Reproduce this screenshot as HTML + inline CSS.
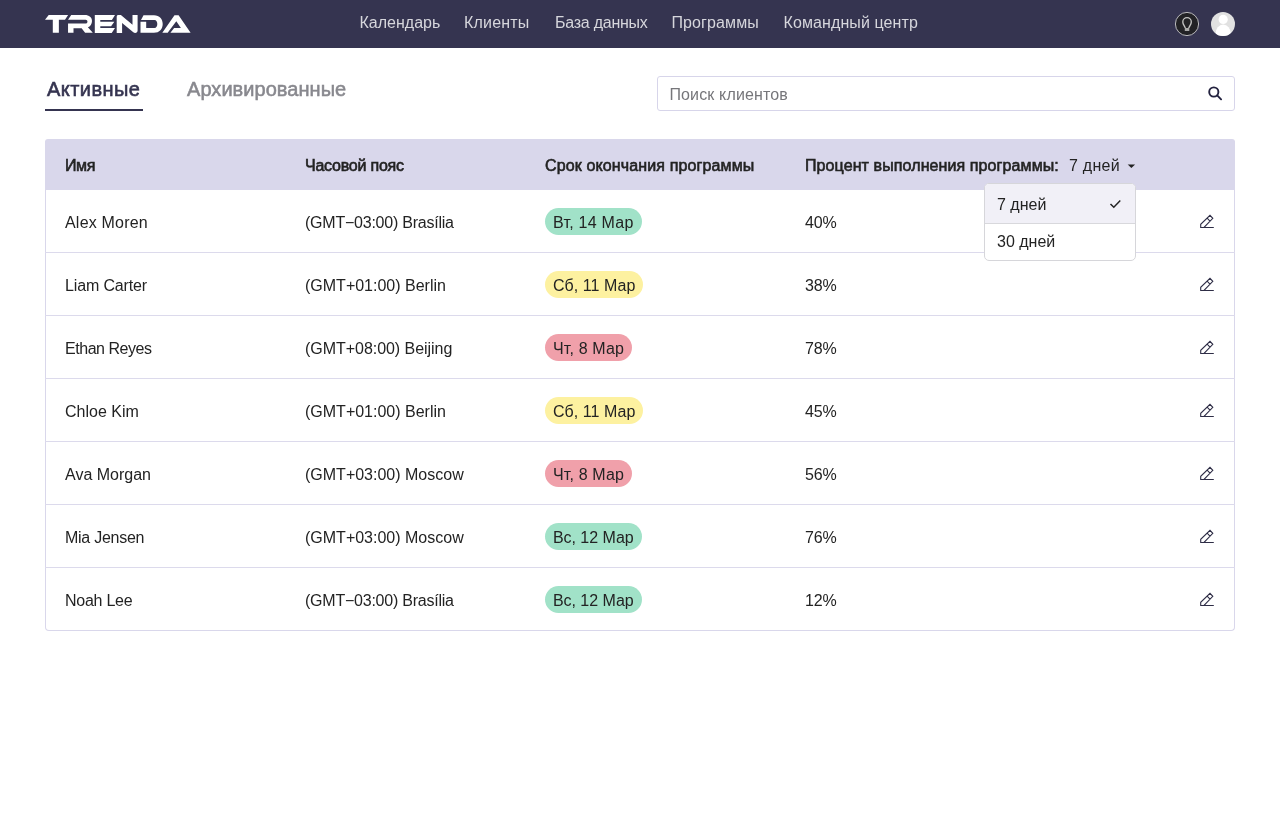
<!DOCTYPE html>
<html><head><meta charset="utf-8"><title>Trenda</title>
<style>
*{box-sizing:border-box}
html,body{margin:0;padding:0;background:#fff;width:1280px;height:832px;overflow:hidden;font-family:"Liberation Sans",sans-serif;color:#232323}
.nav{position:absolute;left:0;top:0;width:1280px;height:48px;background:#353450}
.logo{position:absolute;left:45px;top:15px}
.nl{position:absolute;top:14px;font-size:16px;line-height:18px;color:#d6d6dc;white-space:nowrap}
.tab{position:absolute;top:78px;font-size:20px;line-height:23px;font-weight:400;white-space:nowrap}
.ul{position:absolute;left:45px;top:109px;width:98px;height:2px;background:#353450}
.search{position:absolute;left:657px;top:76px;width:578px;height:35px;border:1px solid #d7d5ea;border-radius:3px;background:#fff}
.ph{position:absolute;left:11.4px;top:9px;letter-spacing:0.15px;font-size:16px;line-height:18px;color:#76767a;white-space:nowrap}
.table{position:absolute;left:45px;top:140px;width:1190px;height:491px;border:1px solid #d9d7eb;border-top:none;border-radius:4px;overflow:hidden}
.thead{position:absolute;left:0;top:139px;width:1190px;height:51px;background:#d9d7eb;border-radius:3px 3px 0 0}
.th{position:absolute;top:157px;font-size:16px;line-height:18px;font-weight:400;-webkit-text-stroke:0.6px #232323;white-space:nowrap;color:#232323}
.row{position:absolute;left:45px;width:1190px;height:63px;border-bottom:1px solid #dcdaec}
.cell{position:absolute;top:24px;font-size:16px;line-height:18px;white-space:nowrap}
.c1{left:20px} .c2{left:260px} .c4{left:760px}
.badge{position:absolute;left:500px;top:18px;height:27px;border-radius:14px;padding:0 8px;font-size:16px;line-height:29px;white-space:nowrap}
.g{background:#a1e2c8} .y{background:#fdf1a0} .r{background:#f0a0aa}
.pen{position:absolute;left:1154px;top:24px}
.dd{position:absolute;left:984px;top:183px;width:152px;height:78px;border:1px solid #d6d6da;border-radius:5px;background:#fff;overflow:hidden}
.dd1{position:absolute;left:0;top:0;width:150px;height:40px;background:#f1f0f7;border-bottom:1px solid #d8d8dc}
.ddt{position:absolute;left:12px;font-size:16px;line-height:18px;white-space:nowrap;color:#232323}
.wrap{position:absolute;left:0;top:0;width:1280px;height:832px;will-change:transform}
</style></head><body><div class="wrap">
<div class="nav">
  <svg class="logo" width="146" height="18" viewBox="0 0 146 18">
    <g fill="#ffffff" fill-rule="evenodd">
      <path d="M3.7 0 H23.1 L20 4.75 H13.86 V17.8 H7.8 V4.75 H0 Z"/>
      <path d="M26.2 0 H39.8 C44.2 0 47 2.6 47 5.9 C47 8.8 45.3 11.3 42.9 12.3 L47.8 17.8 H40.1 L36.6 13.15 H28.5 V17.8 H23.04 V8.5 H40.6 C41.6 8.5 42.45 7.7 42.45 6.65 C42.45 5.6 41.6 4.8 40.6 4.8 H23.04 Z"/>
      <path d="M49.8 0 H70 L66.9 5.05 H55.3 V6.85 H69.3 L66.1 11.25 H55.3 V13.05 H70 L66.7 18 H49.8 Z"/>
      <path d="M73.4 0 H75.9 L87.5 9.7 V0 H92.6 V15.6 C92.6 17 91.6 18 90.2 18 C89.5 18 88.9 17.8 88.3 17.3 L77.1 8 V18 H71.7 V1.7 C71.7 0.7 72.4 0 73.4 0 Z"/>
      <path d="M98.5 0.2 H109 C114.5 0.2 117.7 4 117.7 9 C117.7 14 114.5 17.8 109 17.8 H95.5 V6.7 H101.2 V12.9 H109.5 C111.3 12.9 112.3 11.2 112.3 8.9 C112.3 6.6 111.3 4.9 109.5 4.9 H96 Z"/>
      <path d="M117.3 17.8 L129.5 0.2 H133.6 L145.6 17.8 Z M131.3 6.3 L122.7 17.8 H125.4 L129.1 12.9 H135.9 Z"/>
    </g>
  </svg>
  <span class="nl" style="left:359.5px">Календарь</span>
  <span class="nl" style="left:464px;letter-spacing:0.2px">Клиенты</span>
  <span class="nl" style="left:555px;letter-spacing:-0.25px">База данных</span>
  <span class="nl" style="left:671.5px;letter-spacing:0.1px">Программы</span>
  <span class="nl" style="left:783.5px;letter-spacing:0.1px">Командный центр</span>
  <svg style="position:absolute;left:1174px;top:11px" width="26" height="26" viewBox="1174 11 26 26">
    <circle cx="1187" cy="24" r="11.6" fill="#222226" stroke="#c9c9cc" stroke-width="0.9"/>
    <path d="M1185.3 28 C1185 26.2 1182.8 24.6 1182.8 21.9 A4.25 4.25 0 0 1 1191.3 21.9 C1191.3 24.6 1189.1 26.2 1188.8 28" fill="none" stroke="#c4c4c4" stroke-width="1.35"/>
    <rect x="1184.8" y="28" width="4.5" height="3" fill="#a8a8a8"/>
  </svg>
  <svg style="position:absolute;left:1210px;top:11px" width="26" height="26" viewBox="1210 11 26 26">
    <defs><clipPath id="av"><circle cx="1223" cy="24" r="12"/></clipPath></defs>
    <circle cx="1223" cy="24" r="12" fill="#e1e1e1"/>
    <g clip-path="url(#av)" fill="#ffffff">
      <circle cx="1223.2" cy="19.4" r="4.6"/>
      <ellipse cx="1223.2" cy="33.5" rx="7.6" ry="9"/>
    </g>
  </svg>
</div>
<span class="tab" style="left:47px;color:#353450;letter-spacing:0.45px;-webkit-text-stroke:0.6px #353450">Активные</span>
<div class="ul"></div>
<span class="tab" style="left:187px;color:#88888e;letter-spacing:0.05px;-webkit-text-stroke:0.55px #88888e">Архивированные</span>
<div class="search"><span class="ph">Поиск клиентов</span>
  <svg style="position:absolute;left:547px;top:7px" width="20" height="20" viewBox="1204 83 20 20">
    <circle cx="1212.8" cy="91.0" r="4.6" fill="none" stroke="#23223f" stroke-width="1.9"/>
    <path d="M1216.2 94.4 L1220.1 98.3" stroke="#23223f" stroke-width="1.9" stroke-linecap="round"/>
  </svg>
</div>
<div class="table"></div>
<div class="thead" style="left:45px"></div>
<span class="th" style="left:65px;letter-spacing:-0.4px">Имя</span>
<span class="th" style="left:305px;letter-spacing:-0.22px">Часовой пояс</span>
<span class="th" style="left:545px;letter-spacing:0.13px">Срок окончания программы</span>
<span class="th" style="left:805px;letter-spacing:0.1px">Процент выполнения программы:</span>
<span class="nl" style="left:1069px;top:157px;color:#232323;letter-spacing:0.25px">7 дней</span>
<svg style="position:absolute;left:1126px;top:162px" width="10" height="8" viewBox="0 0 10 8"><path d="M1.7 2.4 H9.1 L5.4 6.1 Z" fill="#232323"/></svg>
<div class="row" style="top:190px">
  <span class="cell c1" style="letter-spacing:0.2px">Alex Moren</span><span class="cell c2" style="letter-spacing:-0.23px">(GMT−03:00) Brasília</span><span class="badge g" style="letter-spacing:0.25px">Вт, 14 Мар</span><span class="cell c4" style="letter-spacing:-0.2px">40%</span>
  <svg class="pen" width="16" height="16" viewBox="0 0 16 16"><path d="M1.7 13.5 V10.3 L11 1.4 L13.8 4.3 L5 13.5 Z M8.1 4.2 L11 7.1 M1.7 13.5 H14.8" fill="none" stroke="#2e2d46" stroke-width="1.1" stroke-linejoin="miter"/></svg>
</div>
<div class="row" style="top:253px">
  <span class="cell c1" style="letter-spacing:-0.15px">Liam Carter</span><span class="cell c2" style="letter-spacing:0px">(GMT+01:00) Berlin</span><span class="badge y" style="letter-spacing:0.05px">Сб, 11 Мар</span><span class="cell c4" style="letter-spacing:-0.2px">38%</span>
  <svg class="pen" width="16" height="16" viewBox="0 0 16 16"><path d="M1.7 13.5 V10.3 L11 1.4 L13.8 4.3 L5 13.5 Z M8.1 4.2 L11 7.1 M1.7 13.5 H14.8" fill="none" stroke="#2e2d46" stroke-width="1.1" stroke-linejoin="miter"/></svg>
</div>
<div class="row" style="top:316px">
  <span class="cell c1" style="letter-spacing:-0.46px">Ethan Reyes</span><span class="cell c2" style="letter-spacing:-0.04px">(GMT+08:00) Beijing</span><span class="badge r" style="letter-spacing:0.15px">Чт, 8 Мар</span><span class="cell c4" style="letter-spacing:-0.2px">78%</span>
  <svg class="pen" width="16" height="16" viewBox="0 0 16 16"><path d="M1.7 13.5 V10.3 L11 1.4 L13.8 4.3 L5 13.5 Z M8.1 4.2 L11 7.1 M1.7 13.5 H14.8" fill="none" stroke="#2e2d46" stroke-width="1.1" stroke-linejoin="miter"/></svg>
</div>
<div class="row" style="top:379px">
  <span class="cell c1" style="letter-spacing:0px">Chloe Kim</span><span class="cell c2" style="letter-spacing:0px">(GMT+01:00) Berlin</span><span class="badge y" style="letter-spacing:0.05px">Сб, 11 Мар</span><span class="cell c4" style="letter-spacing:-0.2px">45%</span>
  <svg class="pen" width="16" height="16" viewBox="0 0 16 16"><path d="M1.7 13.5 V10.3 L11 1.4 L13.8 4.3 L5 13.5 Z M8.1 4.2 L11 7.1 M1.7 13.5 H14.8" fill="none" stroke="#2e2d46" stroke-width="1.1" stroke-linejoin="miter"/></svg>
</div>
<div class="row" style="top:442px">
  <span class="cell c1" style="letter-spacing:0px">Ava Morgan</span><span class="cell c2" style="letter-spacing:0px">(GMT+03:00) Moscow</span><span class="badge r" style="letter-spacing:0.15px">Чт, 8 Мар</span><span class="cell c4" style="letter-spacing:-0.2px">56%</span>
  <svg class="pen" width="16" height="16" viewBox="0 0 16 16"><path d="M1.7 13.5 V10.3 L11 1.4 L13.8 4.3 L5 13.5 Z M8.1 4.2 L11 7.1 M1.7 13.5 H14.8" fill="none" stroke="#2e2d46" stroke-width="1.1" stroke-linejoin="miter"/></svg>
</div>
<div class="row" style="top:505px">
  <span class="cell c1" style="letter-spacing:-0.26px">Mia Jensen</span><span class="cell c2" style="letter-spacing:0px">(GMT+03:00) Moscow</span><span class="badge g" style="letter-spacing:-0.05px">Вс, 12 Мар</span><span class="cell c4" style="letter-spacing:-0.2px">76%</span>
  <svg class="pen" width="16" height="16" viewBox="0 0 16 16"><path d="M1.7 13.5 V10.3 L11 1.4 L13.8 4.3 L5 13.5 Z M8.1 4.2 L11 7.1 M1.7 13.5 H14.8" fill="none" stroke="#2e2d46" stroke-width="1.1" stroke-linejoin="miter"/></svg>
</div>
<div class="row" style="top:568px;border-bottom:none">
  <span class="cell c1" style="letter-spacing:-0.26px">Noah Lee</span><span class="cell c2" style="letter-spacing:-0.23px">(GMT−03:00) Brasília</span><span class="badge g" style="letter-spacing:-0.05px">Вс, 12 Мар</span><span class="cell c4" style="letter-spacing:-0.2px">12%</span>
  <svg class="pen" width="16" height="16" viewBox="0 0 16 16"><path d="M1.7 13.5 V10.3 L11 1.4 L13.8 4.3 L5 13.5 Z M8.1 4.2 L11 7.1 M1.7 13.5 H14.8" fill="none" stroke="#2e2d46" stroke-width="1.1" stroke-linejoin="miter"/></svg>
</div>
<div class="dd">
  <div class="dd1"></div>
  <span class="ddt" style="top:12px;left:12px">7 дней</span>
  <svg style="position:absolute;left:123px;top:14px" width="14" height="12" viewBox="0 0 14 12"><path d="M2.5 6 L5.8 9.3 L12.3 2.5" fill="none" stroke="#232323" stroke-width="1.5"/></svg>
  <span class="ddt" style="top:49px;left:12px">30 дней</span>
</div>
</div></body></html>
